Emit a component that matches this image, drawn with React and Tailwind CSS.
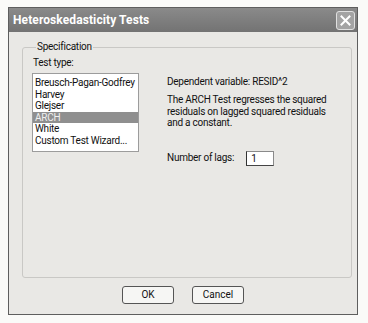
import React from "react";

const items = ["Breusch-Pagan-Godfrey", "Harvey", "Glejser", "ARCH", "White", "Custom Test Wizard..."];

function ListItem({ label }) {
  const selected = label === "ARCH";
  return (
    <div
      className={
        selected
          ? "leading-[11.5px] h-[11.5px] pl-[2px] whitespace-nowrap bg-[#8f8f8f] text-[#efefef]"
          : "leading-[11.5px] h-[11.5px] pl-[2px] whitespace-nowrap"
      }
    >
      {label}
    </div>
  );
}

export default function App() {
  return (
    <div className="w-[368px] h-[323px] bg-[#fafaf8] pt-[7px] pl-[8px]" style={{ fontFamily: "Roboto, Arial, sans-serif" }}>
      <div className="w-[350px] h-[308px] border border-[#5e5e5e] bg-[#e9e8e5] flex flex-col">
        <div className="h-[24px] shrink-0 bg-gradient-to-b from-[#8a8a8a] to-[#737373] flex items-center justify-between pl-[4px] pr-[2px]">
          <span className="text-white font-bold text-[12px] tracking-[0.1px]">Heteroskedasticity Tests</span>
          <div className="w-[19px] h-[19px] rounded-[3px] border border-[#e0e0e0] bg-[#a3a3a3] flex items-center justify-center">
            <svg width="11" height="11" viewBox="0 0 11 11">
              <path d="M1.5 1.5 L9.5 9.5 M9.5 1.5 L1.5 9.5" stroke="#ffffff" strokeWidth="2" strokeLinecap="square" />
            </svg>
          </div>
        </div>
        <div className="flex-1 flex flex-col pl-[13px] pr-[9px]">
          <fieldset className="mt-[9px] h-[237px] border border-[#c9c8c5] rounded-[3px] pl-[9px] pr-[8px] text-[10px] tracking-[-0.25px] text-[#111]">
            <legend className="ml-[4px] px-[1px] leading-[12px]">Specification</legend>
            <div className="flex">
              <div className="w-[107px] flex flex-col">
                <div className="leading-[12px] mt-[4px] ml-[1px]">Test type:</div>
                <div className="mt-[4px] h-[79px] border border-[#9c9c9c] bg-white pt-[3px]">
                  {items.map((t) => (
                    <ListItem key={t} label={t} />
                  ))}
                </div>
              </div>
              <div className="ml-[28px] flex flex-col">
                <div className="mt-[23px] leading-[12px]">Dependent variable: RESID^2</div>
                <div className="mt-[6px] leading-[11.5px] w-[176px]">
                  The ARCH Test regresses the squared residuals on lagged squared residuals and a constant.
                </div>
                <div className="mt-[22px] flex items-center">
                  <span className="leading-[12px]">Number of lags:</span>
                  <div className="ml-[12px] w-[28px] h-[15px] border border-[#8a8a8a] border-l-[#333] border-b-[#444] bg-white leading-[13px] pl-[4px]">
                    1
                  </div>
                </div>
              </div>
            </div>
          </fieldset>
          <div className="mt-[8px] flex justify-center gap-[18px] pr-[4px]">
            <div className="w-[52px] h-[18px] rounded-[3px] border border-[#555] bg-[#f6f6f4] text-[10px] leading-[16px] text-center text-[#111]">OK</div>
            <div className="w-[52px] h-[18px] rounded-[3px] border border-[#555] bg-[#f6f6f4] text-[10px] leading-[16px] text-center text-[#111]">Cancel</div>
          </div>
        </div>
      </div>
    </div>
  );
}
